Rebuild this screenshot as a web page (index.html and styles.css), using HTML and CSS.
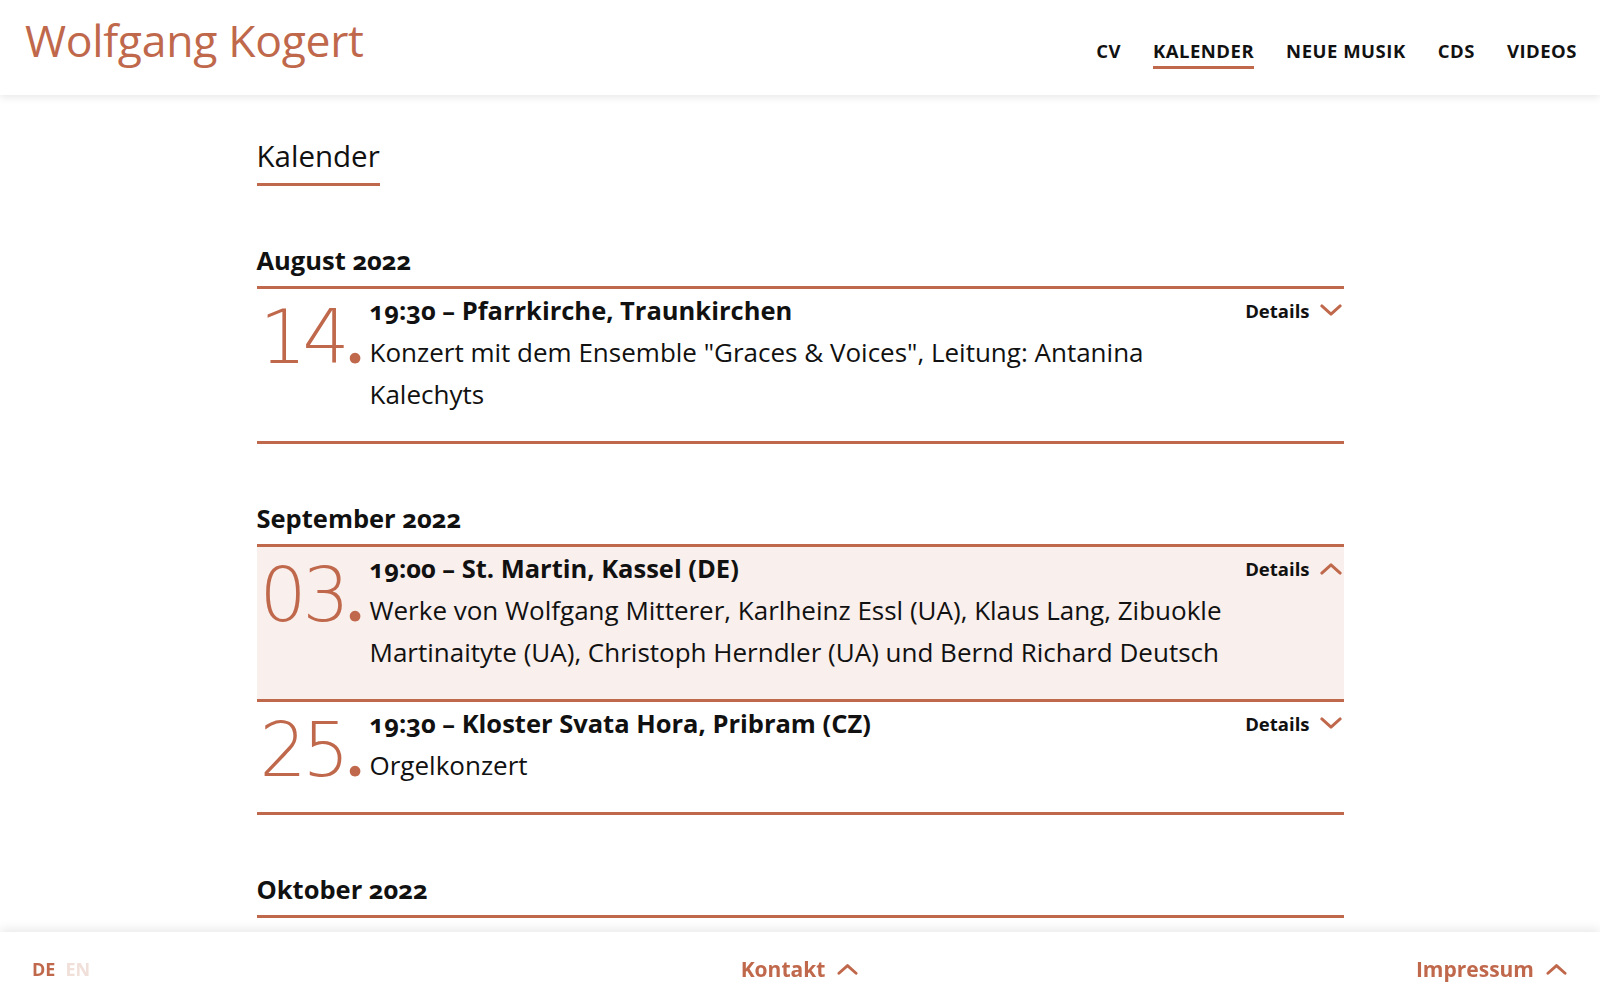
FILE: index.html
```html
<!DOCTYPE html>
<html lang="de">
<head>
<meta charset="utf-8">
<title>Kalender – Wolfgang Kogert</title>
<link rel="stylesheet" href="styles.css">
</head>
<body>
<header class="site-header">
  <a class="logo" href="#">Wolfgang Kogert</a>
  <nav class="main-nav">
    <a href="#" class="nav-link">CV</a>
    <a href="#" class="nav-link active">Kalender</a>
    <a href="#" class="nav-link">Neue Musik</a>
    <a href="#" class="nav-link">CDs</a>
    <a href="#" class="nav-link">Videos</a>
  </nav>
</header>

<main class="content">
  <h1 class="page-title">Kalender</h1>

  <section class="month">
    <h2 class="month-title">August 2022</h2>
    <ul class="events">
      <li class="event">
        <div class="event-day">14<span class="dot">.</span></div>
        <div class="event-body">
          <div class="event-title"><span class="time">19:30</span> – Pfarrkirche, Traunkirchen</div>
          <div class="event-desc">Konzert mit dem Ensemble "Graces &amp; Voices", Leitung: Antanina Kalechyts</div>
        </div>
        <button class="details">Details
          <svg class="chev" viewBox="0 0 24 14" width="22" height="13"><path d="M2 2 L12 11 L22 2" fill="none" stroke="currentColor" stroke-width="3.2" stroke-linecap="round" stroke-linejoin="round"/></svg>
        </button>
      </li>
    </ul>
  </section>

  <section class="month">
    <h2 class="month-title">September 2022</h2>
    <ul class="events">
      <li class="event open">
        <div class="event-day">03<span class="dot">.</span></div>
        <div class="event-body">
          <div class="event-title"><span class="time">19:00</span> – St. Martin, Kassel (DE)</div>
          <div class="event-desc">Werke von Wolfgang Mitterer, Karlheinz Essl (UA), Klaus Lang, Zibuokle Martinaityte (UA), Christoph Herndler (UA) und Bernd Richard Deutsch</div>
        </div>
        <button class="details">Details
          <svg class="chev" viewBox="0 0 24 14" width="22" height="13"><path d="M2 12 L12 3 L22 12" fill="none" stroke="currentColor" stroke-width="3.2" stroke-linecap="round" stroke-linejoin="round"/></svg>
        </button>
      </li>
      <li class="event">
        <div class="event-day">25<span class="dot">.</span></div>
        <div class="event-body">
          <div class="event-title"><span class="time">19:30</span> – Kloster Svata Hora, Pribram (CZ)</div>
          <div class="event-desc">Orgelkonzert</div>
        </div>
        <button class="details">Details
          <svg class="chev" viewBox="0 0 24 14" width="22" height="13"><path d="M2 2 L12 11 L22 2" fill="none" stroke="currentColor" stroke-width="3.2" stroke-linecap="round" stroke-linejoin="round"/></svg>
        </button>
      </li>
    </ul>
  </section>

  <section class="month">
    <h2 class="month-title">Oktober 2022</h2>
    <ul class="events"></ul>
  </section>
</main>

<footer class="site-footer">
  <div class="lang">
    <a href="#" class="lang-link current">DE</a>
    <a href="#" class="lang-link">EN</a>
  </div>
  <a href="#" class="foot-link center">Kontakt
    <svg viewBox="0 0 24 14" width="21" height="12"><path d="M2 12 L12 3 L22 12" fill="none" stroke="currentColor" stroke-width="3.4" stroke-linecap="round" stroke-linejoin="round"/></svg>
  </a>
  <a href="#" class="foot-link right">Impressum
    <svg viewBox="0 0 24 14" width="21" height="12"><path d="M2 12 L12 3 L22 12" fill="none" stroke="currentColor" stroke-width="3.4" stroke-linecap="round" stroke-linejoin="round"/></svg>
  </a>
</footer>
</body>
</html>
```

FILE: styles.css
```css
* { box-sizing: border-box; }

html, body {
  margin: 0;
  padding: 0;
  background: #fff;
}

body {
  font-family: "Open Sans", "Noto Sans", sans-serif;
  color: #111;
  font-variant-numeric: oldstyle-nums;
}

a { color: inherit; text-decoration: none; }

/* Header */
.site-header {
  position: relative;
  z-index: 2;
  height: 95px;
  display: flex;
  justify-content: space-between;
  align-items: flex-start;
  padding: 0 23px 0 25px;
  background: #fff;
  box-shadow: 0 2px 8px rgba(0, 0, 0, 0.10);
}

.logo {
  font-size: 44.5px;
  line-height: 52px;
  margin-top: 14px;
  color: #c0684b;
  font-weight: 400;
  letter-spacing: -0.3px;
}

.main-nav {
  display: flex;
  gap: 32px;
  margin-top: 38px;
}

.nav-link {
  font-size: 18.5px;
  font-weight: 700;
  text-transform: uppercase;
  letter-spacing: 0.5px;
  line-height: 26px;
  padding-bottom: 2px;
  border-bottom: 3px solid transparent;
}

.nav-link.active {
  border-bottom-color: #c0684b;
}

/* Content */
.content {
  width: 1087px;
  margin: 0 auto;
  padding: 41px 0 120px;
}

.page-title {
  display: inline-block;
  margin: 0;
  font-size: 29.5px;
  font-weight: 400;
  line-height: 40px;
  padding-bottom: 7px;
  border-bottom: 3px solid #c0684b;
}

.month {
  margin-top: 58px;
}

.month-title {
  margin: 0 0 10px;
  font-size: 25.5px;
  font-weight: 700;
  line-height: 32px;
}

.events {
  list-style: none;
  margin: 0;
  padding: 0;
  border-top: 3px solid #c0684b;
}

.event {
  display: grid;
  grid-template-columns: 113px 862px 1fr;
  align-items: start;
  padding: 0 0 26px;
  border-bottom: 3px solid #c0684b;
}

.event.open {
  background: #f9efec;
}

.event-day {
  font-family: "DejaVu Sans", sans-serif;
  font-weight: 200;
  font-size: 74px;
  line-height: 72px;
  height: 72px;
  margin-top: 12px;
  padding-left: 3px;
  letter-spacing: -4px;
  color: #c0684b;
  font-variant-numeric: lining-nums;
  white-space: nowrap;
}

.event-day .dot {
  font-family: "Lato", "Open Sans", sans-serif;
  font-weight: 700;
  font-size: 70px;
  line-height: 0;
  letter-spacing: 0;
  margin-left: 1px;
}

.event-title {
  font-size: 25.5px;
  font-weight: 700;
  line-height: 42px;
}

.event-desc {
  font-size: 26px;
  line-height: 42px;
  font-weight: 400;
}

.details {
  justify-self: end;
  display: flex;
  align-items: center;
  gap: 10px;
  height: 42px;
  padding: 0 2px 0 0;
  margin: 0;
  border: 0;
  background: none;
  font-family: inherit;
  font-size: 18.5px;
  font-weight: 700;
  color: #111;
  cursor: pointer;
}

.details .chev {
  color: #c0684b;
}

/* Footer */
.site-footer {
  position: fixed;
  left: 0;
  right: 0;
  bottom: 0;
  height: 68px;
  display: grid;
  grid-template-columns: 1fr auto 1fr;
  align-items: center;
  padding: 6px 33px 0 32px;
  background: #fff;
  box-shadow: 0 -3px 10px rgba(0, 0, 0, 0.09);
  z-index: 3;
}

.lang {
  display: flex;
  gap: 10px;
  font-size: 18px;
  font-weight: 700;
}

.lang-link { color: #f1dfd9; }
.lang-link.current { color: #c0684b; }

.foot-link {
  display: flex;
  align-items: center;
  gap: 12px;
  color: #c0684b;
  font-size: 21px;
  font-weight: 700;
}

.foot-link.center { justify-self: center; }
.foot-link.right { justify-self: end; }
```
